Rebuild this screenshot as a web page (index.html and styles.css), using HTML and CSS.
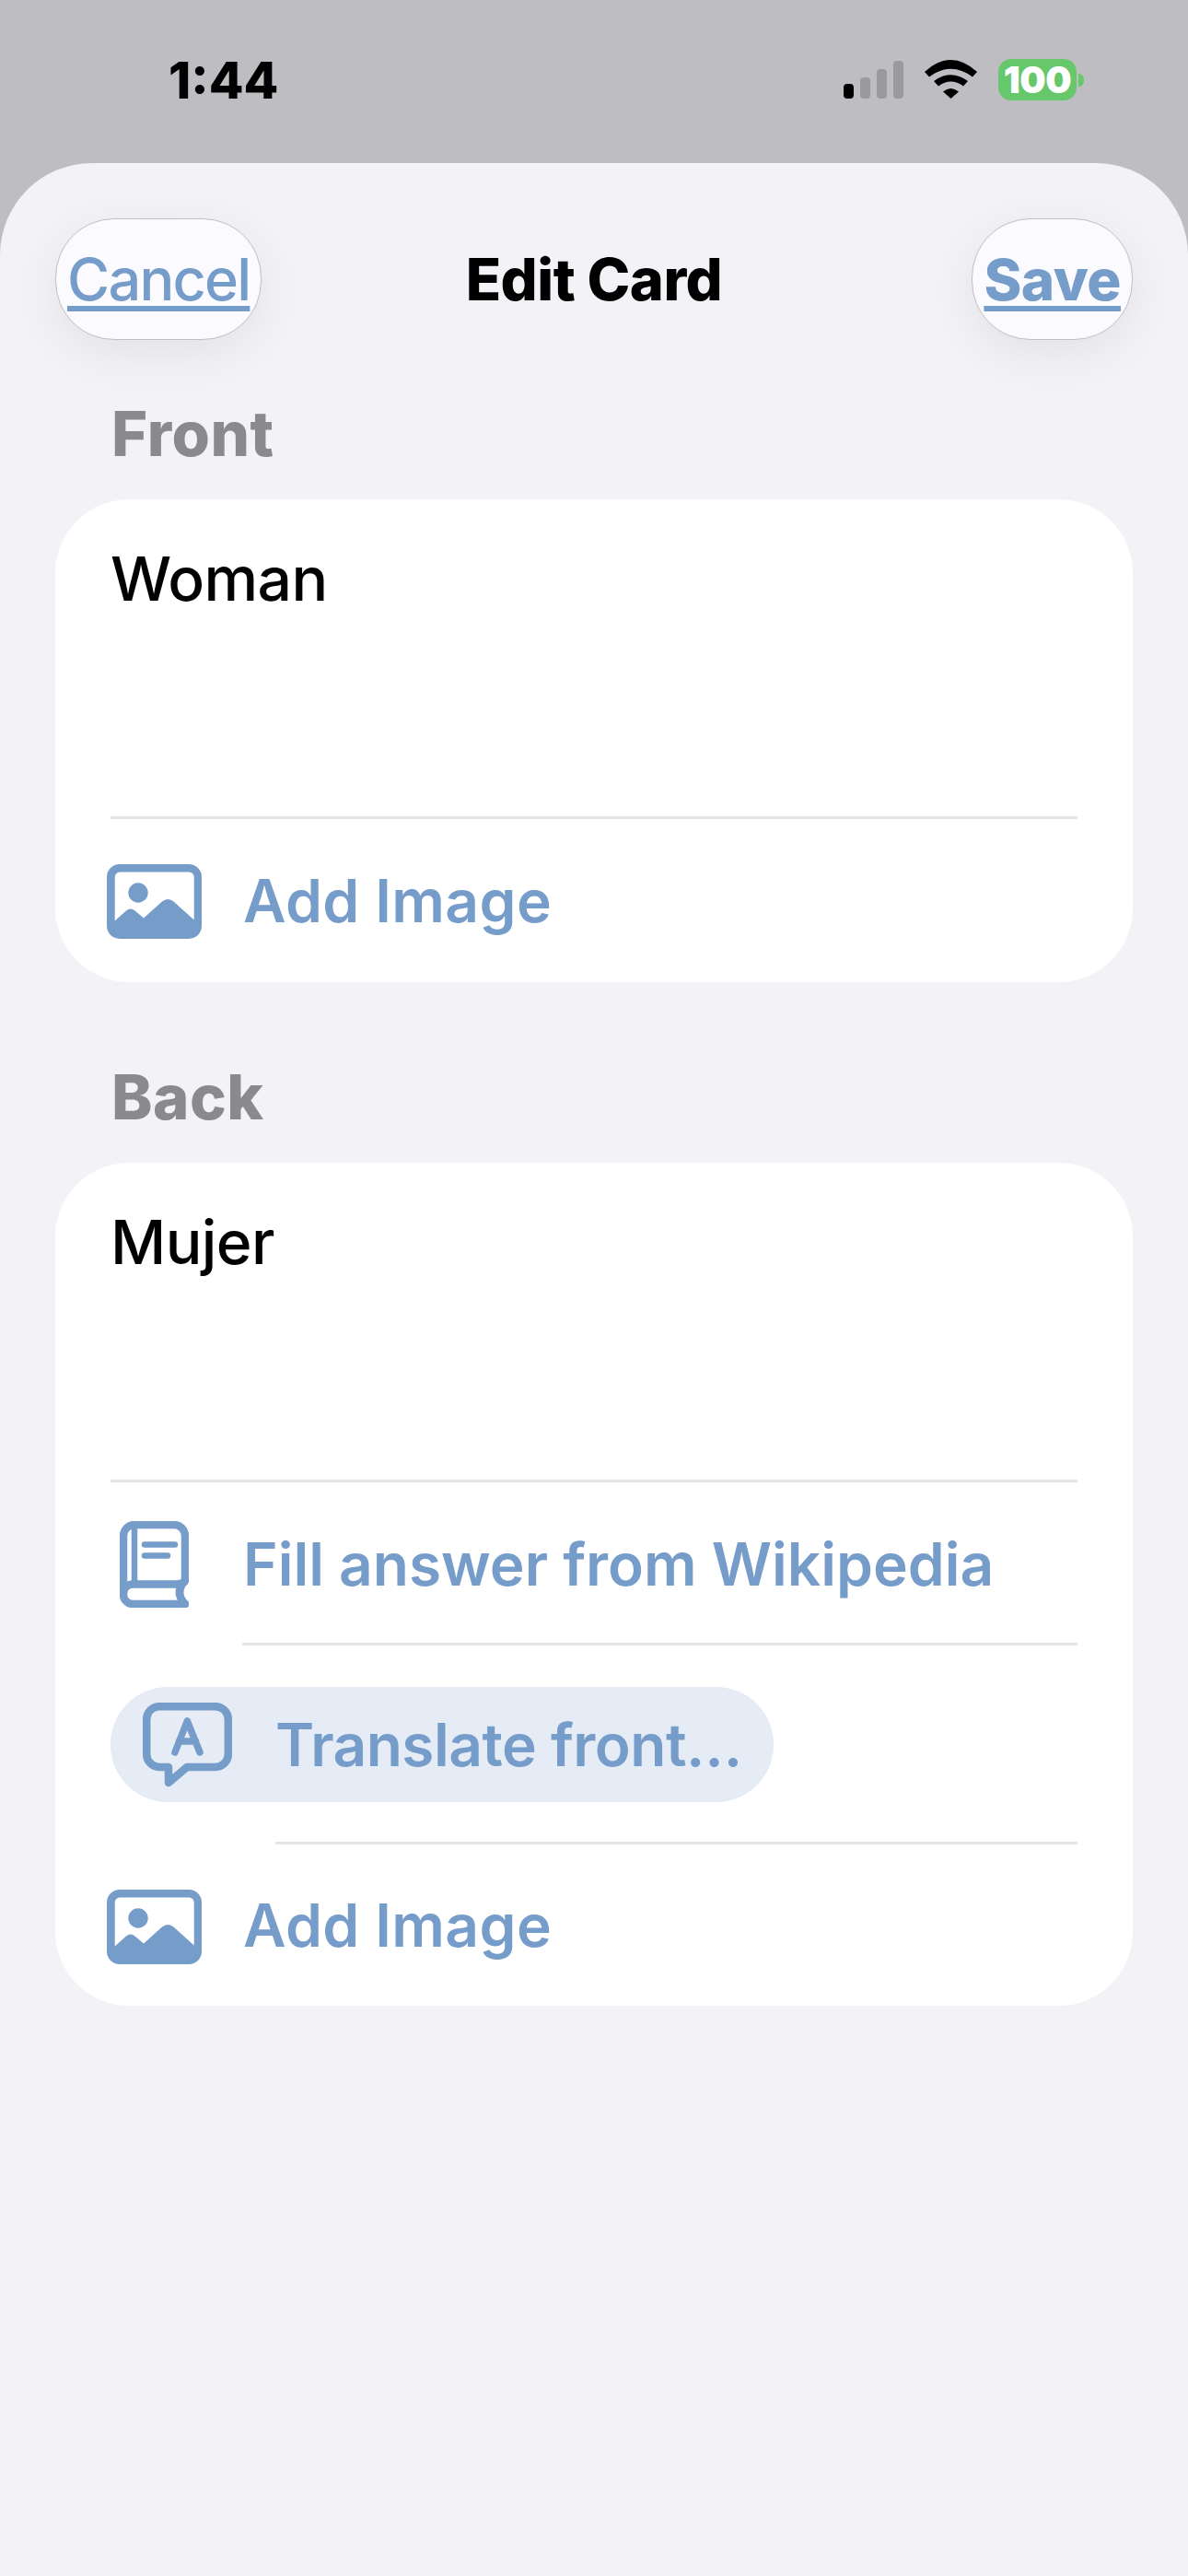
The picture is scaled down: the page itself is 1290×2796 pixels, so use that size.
FILE: index.html
```html
<!DOCTYPE html>
<html lang="en">
<head>
<meta charset="utf-8">
<title>Edit Card</title>
<link rel="stylesheet" href="styles.css">
</head>
<body>
<svg class="defs" width="0" height="0" aria-hidden="true">
  <symbol id="image" viewBox="0 0 103 81">
    <path fill-rule="evenodd" d="M14 0H89A14 14 0 0 1 103 14V67A14 14 0 0 1 89 81H14A14 14 0 0 1 0 67V14A14 14 0 0 1 14 0ZM14 8.500A5.500 5.500 0 0 0 8.700 14V61.500L21 50.500Q25.700 46.500 30.500 50.500L40 58.500L60 40.500Q66.300 35.500 72.500 40.500L94.700 60.500V14A5.500 5.500 0 0 0 89 8.500Z"/>
    <circle cx="34" cy="31" r="10.700"/>
  </symbol>
</svg>
<header class="status">
  <span class="time">1:44</span>
  <div class="status-icons">
    <div class="signal">
      <i class="bar bar-1"></i><i class="bar bar-2"></i><i class="bar bar-3"></i><i class="bar bar-4"></i>
    </div>
    <svg class="wifi" viewBox="0 0 57 42">
      <path d="M0 13Q28.500-13 57 13L52 18.500Q28.500 1 5 18.500Z"/>
      <path d="M10 23Q28.500 9.500 47 23L42 28.500Q28.500 18.500 15 28.500Z"/>
      <path d="M20 34.500Q28.500 27.500 37 34.500L28.500 42Z"/>
    </svg>
    <div class="battery">
      <span class="battery-body">100</span><i class="battery-nub"></i>
    </div>
  </div>
</header>
<main class="sheet">
  <nav class="nav">
    <a class="nav-btn nav-cancel">Cancel</a>
    <h1 class="nav-title">Edit Card</h1>
    <a class="nav-btn nav-save">Save</a>
  </nav>

  <h2 class="label label-front">Front</h2>
  <section class="card">
    <div class="field">Woman</div>
    <div class="row row-image">
      <svg class="ico ico-image"><use href="#image"/></svg>
      <span class="action">Add Image</span>
    </div>
  </section>

  <h2 class="label label-back">Back</h2>
  <section class="card">
    <div class="field">Mujer</div>
    <div class="row row-wiki">
      <svg class="ico ico-book" viewBox="0 0 75 94">
        <path class="line" d="M71 64V16A12 12 0 0 0 59 4H16A12 12 0 0 0 4 16V80A10 10 0 0 0 14 90H71"/>
        <path class="line" d="M4 78A10 10 0 0 1 14 68.500H62Q71 68 71 64"/>
        <path class="line" d="M71 64Q59 78 71 90"/>
        <path class="line thin" d="M16 4V66"/>
        <path class="line thin" d="M27 25.500H60M27 37.500H52"/>
      </svg>
      <span class="action">Fill answer from Wikipedia</span>
    </div>
    <div class="row-translate">
      <div class="pill">
        <svg class="ico ico-translate" viewBox="0 0 97 92">
          <path class="line" d="M28 70H18A14 14 0 0 1 4.200 56V18A14 14 0 0 1 18 4.200H79A14 14 0 0 1 92.800 18V56A14 14 0 0 1 79 70H48L28 87Z"/>
          <path class="line medium" d="M35 54L48.300 20L62 54M39.500 42H57.500"/>
        </svg>
        <span class="action action-translate">Translate front…</span>
      </div>
    </div>
    <div class="row row-image row-last">
      <svg class="ico ico-image"><use href="#image"/></svg>
      <span class="action">Add Image</span>
    </div>
  </section>
</main>
</body>
</html>
```

FILE: styles.css
```css
* { box-sizing: border-box; }

html, body {
  margin: 0;
  padding: 0;
}

body {
  width: 1290px;
  height: 2796px;
  overflow: hidden;
  background: #bebdc2;
  font-family: Inter, "Liberation Sans", sans-serif;
}

.defs { position: absolute; }

/* status bar */
.status {
  height: 177px;
  display: flex;
  justify-content: space-between;
  padding: 62px 113px 0 183px;
}

.time {
  font-size: 55px;
  font-weight: 800;
  line-height: 50px;
  color: #000;
}

.status-icons {
  display: flex;
  align-items: flex-start;
  height: 50px;
}

.signal {
  display: flex;
  align-items: flex-end;
  gap: 7px;
  height: 41px;
  margin-top: 4px;
}

.bar {
  display: block;
  width: 11px;
  border-radius: 4px;
  background: #9a9a9c;
}
.bar-1 { height: 16px; background: #000; }
.bar-2 { height: 23px; }
.bar-3 { height: 32px; }
.bar-4 { height: 41px; }

.wifi {
  display: block;
  width: 57px;
  height: 42px;
  margin: 3px 23px 0;
  fill: #000;
}

.battery {
  display: flex;
  align-items: center;
  margin-top: 2px;
}

.battery-body {
  width: 85px;
  height: 45px;
  border-radius: 14px;
  background: #66c76b;
  color: #fff;
  font-size: 40px;
  font-weight: 900;
  line-height: 45px;
  text-align: center;
  letter-spacing: -0.5px;
}

.battery-nub {
  display: block;
  width: 6px;
  height: 14px;
  margin-left: 2px;
  border-radius: 0 6px 6px 0;
  background: #66c76b;
}

/* sheet */
.sheet {
  height: 2619px;
  padding: 60px 60px 0;
  background: #f2f2f7;
  border-radius: 100px 100px 0 0;
}

.nav {
  display: grid;
  grid-template-columns: 1fr auto 1fr;
  align-items: center;
  height: 132px;
}

.nav-btn {
  height: 132px;
  padding: 0 12px;
  display: flex;
  align-items: center;
  border: 1.5px solid #c0c0c3;
  border-radius: 64px;
  background: #fbfbff;
  box-shadow: 0 14px 50px rgba(0, 0, 0, .07);
  color: #769cca;
  font-size: 63px;
  text-decoration: underline;
  text-decoration-thickness: 6px;
  text-underline-offset: 6px;
}

.nav-cancel {
  justify-self: start;
  font-weight: 500;
  letter-spacing: -1.8px;
}

.nav-save {
  justify-self: end;
  font-size: 62px;
  font-weight: 800;
  letter-spacing: -0.5px;
}

.nav-title {
  margin: 0;
  font-size: 63px;
  font-weight: 800;
  line-height: 72px;
  color: #000;
  letter-spacing: -0.5px;
}

.label {
  margin: 0;
  padding-left: 61px;
  font-size: 67px;
  font-weight: 800;
  line-height: 74px;
  letter-spacing: 0.5px;
  color: #8a8a8e;
}
.label-front { margin-top: 65px; height: 108px; }
.label-back  { margin-top: 88px; height: 108px; }

.card {
  background: #fff;
  border-radius: 80px;
  padding: 0 60px;
}

.field {
  height: 347px;
  padding-top: 47px;
  font-size: 66px;
  font-weight: 550;
  line-height: 78px;
  letter-spacing: -0.6px;
  color: #000;
  border-bottom: 3px solid #e5e5e7;
}

.row {
  display: flex;
  align-items: center;
}

.action {
  color: #769cca;
  font-size: 64px;
  font-weight: 600;
  line-height: 78px;
  white-space: nowrap;
}

.action-translate { letter-spacing: -0.5px; }

.ico { display: block; flex: none; }

.line {
  fill: none;
  stroke: #769cca;
  stroke-width: 8.500;
  stroke-linecap: round;
  stroke-linejoin: round;
}
.line.thin { stroke-width: 6.500; }
.line.medium { stroke-width: 7.500; }

.row-image {
  height: 177px;
  padding-top: 2px;
}

.row-image .action {
  margin-top: -2px;
  letter-spacing: 0.4px;
}

.row-image .ico-image {
  width: 103px;
  height: 81px;
  margin-left: -4px;
  margin-right: 45px;
  fill: #769cca;
}

.row-last {
  height: 175px;
  padding-top: 3px;
}

.row-wiki {
  height: 177px;
  position: relative;
}

.ico-book {
  width: 75px;
  height: 94px;
  margin-left: 10px;
  margin-right: 59px;
}

.row-wiki::after {
  content: "";
  position: absolute;
  left: 143px;
  right: 0;
  bottom: 0;
  height: 3px;
  background: #e5e5e7;
}

.row-translate {
  height: 216px;
  padding-top: 45px;
  position: relative;
}

.row-translate::after {
  content: "";
  position: absolute;
  left: 179px;
  right: 0;
  bottom: 0;
  height: 3px;
  background: #e5e5e7;
}

.pill {
  display: inline-flex;
  align-items: center;
  width: 720px;
  height: 125px;
  padding-left: 35px;
  border-radius: 62px;
  background: #e6ecf6;
}

.ico-translate {
  width: 97px;
  height: 92px;
  margin-right: 47px;
}
```
